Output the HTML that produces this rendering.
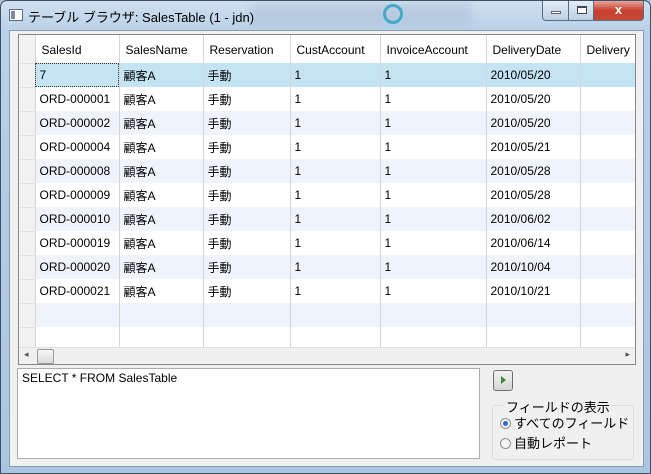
<!DOCTYPE html>
<html><head><meta charset="utf-8"><style>
*{margin:0;padding:0;box-sizing:border-box}
body{width:651px;height:474px;overflow:hidden;font-family:"Liberation Sans","Noto Sans CJK JP",sans-serif;font-size:12px;color:#000;background:#a9c3dc}
.win{position:absolute;left:0;top:0;width:651px;height:474px;background:linear-gradient(180deg,#cfe0ef 0,#b9d1e8 30px,#a9c5e0 100%);border:1px solid #3c4f66;border-radius:7px 7px 0 0}
.blur1{position:absolute;left:250px;top:2px;width:220px;height:22px;background:rgba(120,140,170,.18);filter:blur(5px)}
.title{position:absolute;left:27px;top:6px;font-size:13px;color:#000}
.ico{position:absolute;left:8px;top:8px;width:14px;height:12px;border:1px solid #5a6a80;background:#fff}
.ico:before{content:"";position:absolute;left:1px;top:1px;width:4px;height:8px;background:#7a8aa0}
.ring{position:absolute;left:382px;top:3px;width:20px;height:20px;border-radius:50%;border:3px solid #4aa7c8;box-shadow:0 0 3px #9de}
.btn{position:absolute;top:0;height:20px;border:1px solid #5a6d86;border-top:none}
.client{position:absolute;left:8px;top:29px;width:635px;height:437px;background:#f0f0f0;border:1px solid #8a9db3}
.grid{position:absolute;left:8px;top:3px;width:618px;height:331px;border:1px solid #828790;background:#fff;overflow:hidden}
table{border-collapse:collapse;position:absolute;left:0;top:0;table-layout:fixed;width:699px}
td{height:24px;border-right:1px solid #d5d5d5;padding-left:4px;white-space:nowrap;overflow:hidden}
tr.h td{height:28px;padding-left:6px;padding-top:2px}
td.rh{background:#f2f2f2;border-right:1px solid #d5d5d5;border-bottom:1px solid #e4e4e4}
tr.a td{background:#eef3fc}
tr.a td.rh,tr.h td.rh{background:#f2f2f2}
tr.sel td{background:#c4e4f4}
tr.sel td.rh{background:#f2f2f2}
.hs{position:absolute;left:0;bottom:0;width:616px;height:17px;background:#f0f0f0;border-top:1px solid #e0e0e0}
.thumb{position:absolute;left:18px;top:1px;width:17px;height:15px;border:1px solid #9a9a9a;border-radius:2px;background:linear-gradient(#f6f6f6,#dcdcdc)}
.sql{position:absolute;left:7px;top:337px;width:463px;height:91px;background:#fff;border:1px solid #abadb3;padding:2px 4px;font-size:12px}
.run{position:absolute;left:483px;top:339px;width:20px;height:21px;border:1px solid #707070;border-radius:3px;background:linear-gradient(#f2f2f2,#d6d6d6)}
.run:after{content:"";position:absolute;left:7px;top:5px;border-left:5px solid #3c8a3c;border-top:4px solid transparent;border-bottom:4px solid transparent}
.gb{position:absolute;left:482px;top:374px;width:142px;height:55px;border:1px solid #d5dfe5;border-radius:3px}
.gbl{position:absolute;left:494px;top:366px;background:#f0f0f0;padding:0 2px;font-size:13px}
.r{position:absolute;left:490px;font-size:13px}
.r i{display:inline-block;width:11px;height:11px;border:1px solid #8e8f8f;border-radius:50%;background:#f4f4f4;vertical-align:-1px;margin-right:3px;position:relative}
.r i.on:after{content:"";position:absolute;left:2px;top:2px;width:5px;height:5px;border-radius:50%;background:#2a6fc0}
</style></head><body>
<div class="win">
<div class="blur1"></div>
<div class="ico"></div>
<div class="title">テーブル ブラウザ: SalesTable (1 - jdn)</div>
<div class="ring"></div>
<div class="btn" style="left:541px;width:27px;border-radius:0 0 0 4px;background:linear-gradient(#e4edf6,#bcd0e4)"><div style="position:absolute;left:8px;top:10px;width:10px;height:3px;background:#fff;border:1px solid #667"></div></div>
<div class="btn" style="left:567px;width:26px;background:linear-gradient(#e4edf6,#bcd0e4)"><div style="position:absolute;left:8px;top:5px;width:10px;height:8px;border:1px solid #445;border-top-width:2px;background:#fff"></div></div>
<div class="btn" style="left:592px;width:51px;border-radius:0 0 4px 0;background:linear-gradient(#e8a49a,#c8402e 50%,#c24a36)"><div style="position:absolute;left:0;width:49px;top:1px;text-align:center;color:#fff;font-weight:bold;font-size:13px">x</div></div>
<div class="client">
<div class="grid">
<table>
<colgroup><col style="width:16px"><col style="width:84px"><col style="width:84px"><col style="width:87px"><col style="width:90px"><col style="width:106px"><col style="width:94px"><col style="width:138px"></colgroup>
<tr class="h"><td class="rh"></td><td>SalesId</td><td>SalesName</td><td>Reservation</td><td>CustAccount</td><td>InvoiceAccount</td><td>DeliveryDate</td><td>Delivery</td></tr>
<tr class="sel"><td class="rh"></td><td style="outline:1px dotted #333;outline-offset:-1px">7</td><td>顧客A</td><td>手動</td><td>1</td><td>1</td><td>2010/05/20</td><td></td></tr>
<tr><td class="rh"></td><td>ORD-000001</td><td>顧客A</td><td>手動</td><td>1</td><td>1</td><td>2010/05/20</td><td></td></tr>
<tr class="a"><td class="rh"></td><td>ORD-000002</td><td>顧客A</td><td>手動</td><td>1</td><td>1</td><td>2010/05/20</td><td></td></tr>
<tr><td class="rh"></td><td>ORD-000004</td><td>顧客A</td><td>手動</td><td>1</td><td>1</td><td>2010/05/21</td><td></td></tr>
<tr class="a"><td class="rh"></td><td>ORD-000008</td><td>顧客A</td><td>手動</td><td>1</td><td>1</td><td>2010/05/28</td><td></td></tr>
<tr><td class="rh"></td><td>ORD-000009</td><td>顧客A</td><td>手動</td><td>1</td><td>1</td><td>2010/05/28</td><td></td></tr>
<tr class="a"><td class="rh"></td><td>ORD-000010</td><td>顧客A</td><td>手動</td><td>1</td><td>1</td><td>2010/06/02</td><td></td></tr>
<tr><td class="rh"></td><td>ORD-000019</td><td>顧客A</td><td>手動</td><td>1</td><td>1</td><td>2010/06/14</td><td></td></tr>
<tr class="a"><td class="rh"></td><td>ORD-000020</td><td>顧客A</td><td>手動</td><td>1</td><td>1</td><td>2010/10/04</td><td></td></tr>
<tr><td class="rh"></td><td>ORD-000021</td><td>顧客A</td><td>手動</td><td>1</td><td>1</td><td>2010/10/21</td><td></td></tr>
<tr class="a"><td class="rh"></td><td></td><td></td><td></td><td></td><td></td><td></td><td></td></tr>
<tr><td class="rh"></td><td></td><td></td><td></td><td></td><td></td><td></td><td></td></tr>
</table>
<div class="hs"><span style="position:absolute;left:5px;top:1px;font-size:9px;color:#555">◂</span><div class="thumb"></div><span style="position:absolute;right:5px;top:1px;font-size:9px;color:#555">▸</span></div>
</div>
<div class="sql">SELECT * FROM SalesTable</div>
<div class="run"></div>
<div class="gb"></div>
<div class="gbl">フィールドの表示</div>
<div class="r" style="top:382px"><i class="on"></i>すべてのフィールド</div>
<div class="r" style="top:402px"><i></i>自動レポート</div>
</div>
</div>
</body></html>
